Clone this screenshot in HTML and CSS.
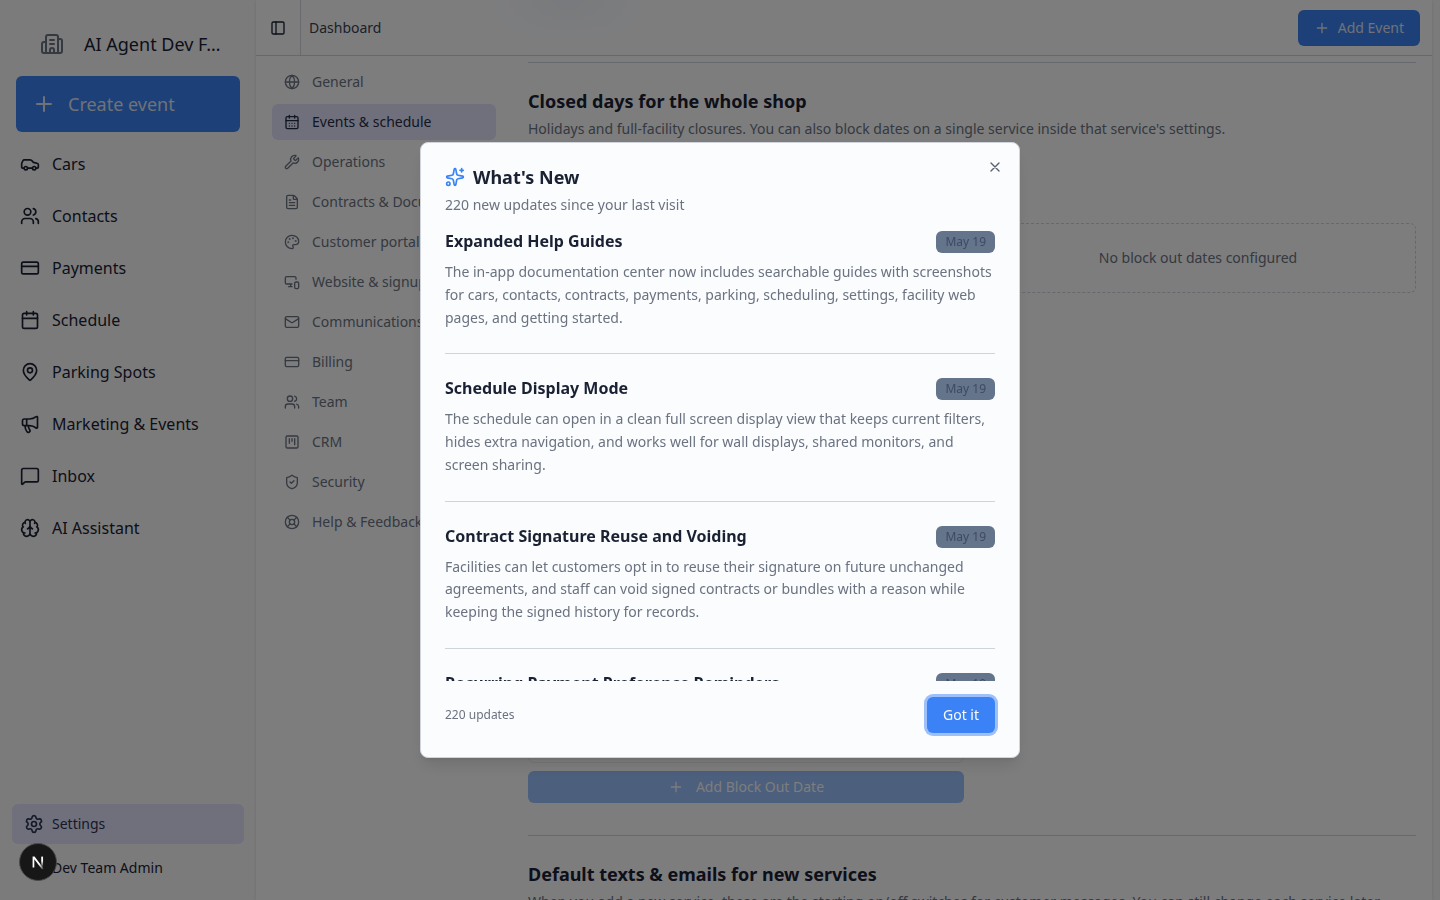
FILE: index.html
```html
<!DOCTYPE html>
<html lang="en">
<head>
<meta charset="utf-8">
<title>Dashboard</title>
<link rel="stylesheet" href="styles.css">
</head>
<body>
<div class="app">
  <aside class="sidebar">
    <div class="workspace">
      <svg class="icon i24 muted" viewBox="0 0 24 24"><path d="M10 12h4M10 8h4M14 21v-3a2 2 0 0 0-4 0v3M6 10H4a2 2 0 0 0-2 2v7a2 2 0 0 0 2 2h16a2 2 0 0 0 2-2V9a2 2 0 0 0-2-2h-2M6 21V5a2 2 0 0 1 2-2h8a2 2 0 0 1 2 2v16"/></svg>
      <span>AI Agent Dev F…</span>
    </div>
    <button class="create"><svg class="icon i24" viewBox="0 0 24 24"><path d="M5 12h14M12 5v14"/></svg><span>Create event</span></button>
    <nav class="nav">
      <a><svg class="icon i20" viewBox="0 0 24 24"><path d="M19 17h2c.6 0 1-.4 1-1v-3c0-.9-.7-1.7-1.5-1.9C18.7 10.6 16 10 16 10s-1.3-1.4-2.2-2.3c-.5-.4-1.1-.7-1.8-.7H5c-.6 0-1.1.4-1.4.9l-1.4 2.9A3.7 3.7 0 0 0 2 12v4c0 .6.4 1 1 1h2M9 17h6"/><circle cx="7" cy="17" r="2"/><circle cx="17" cy="17" r="2"/></svg>Cars</a>
      <a><svg class="icon i20" viewBox="0 0 24 24"><path d="M16 21v-2a4 4 0 0 0-4-4H6a4 4 0 0 0-4 4v2M16 3.128a4 4 0 0 1 0 7.744M22 21v-2a4 4 0 0 0-3-3.87"/><circle cx="9" cy="7" r="4"/></svg>Contacts</a>
      <a><svg class="icon i20" viewBox="0 0 24 24"><rect x="2" y="5" width="20" height="14" rx="2"/><path d="M2 10h20"/></svg>Payments</a>
      <a><svg class="icon i20" viewBox="0 0 24 24"><path d="M8 2v4M16 2v4M3 10h18"/><rect x="3" y="4" width="18" height="18" rx="2"/></svg>Schedule</a>
      <a><svg class="icon i20" viewBox="0 0 24 24"><path d="M20 10c0 4.993-5.539 10.193-7.399 11.799a1 1 0 0 1-1.202 0C9.539 20.193 4 14.993 4 10a8 8 0 0 1 16 0"/><circle cx="12" cy="10" r="3"/></svg>Parking Spots</a>
      <a><svg class="icon i20" viewBox="0 0 24 24"><path d="M11 6a13 13 0 0 0 8.4-2.8A1 1 0 0 1 21 4v12a1 1 0 0 1-1.6.8A13 13 0 0 0 11 14H5a2 2 0 0 1-2-2V8a2 2 0 0 1 2-2zM6 14a12 12 0 0 0 2.4 7.2 2 2 0 0 0 3.2-2.4A8 8 0 0 1 10 14M8 6v8"/></svg>Marketing &amp; Events</a>
      <a><svg class="icon i20" viewBox="0 0 24 24"><path d="M22 17a2 2 0 0 1-2 2H6.828a2 2 0 0 0-1.414.586l-2.202 2.202A.71.71 0 0 1 2 21.286V5a2 2 0 0 1 2-2h16a2 2 0 0 1 2 2z"/></svg>Inbox</a>
      <a><svg class="icon i20" viewBox="0 0 24 24"><path d="M12 18V5M15 13a4.17 4.17 0 0 1-3-4 4.17 4.17 0 0 1-3 4M17.598 6.5A3 3 0 1 0 12 5a3 3 0 1 0-5.598 1.5M17.997 5.125a4 4 0 0 1 2.526 5.77M18 18a4 4 0 0 0 2-7.464M19.967 17.483A4 4 0 1 1 12 18a4 4 0 1 1-7.967-.517M6 18a4 4 0 0 1-2-7.464M6.003 5.125a4 4 0 0 0-2.526 5.77"/></svg>AI Assistant</a>
    </nav>
    <div class="side-foot">
      <a class="settings"><svg class="icon i20" viewBox="0 0 24 24"><path d="M9.671 4.136a2.34 2.34 0 0 1 4.659 0 2.34 2.34 0 0 0 3.319 1.915 2.34 2.34 0 0 1 2.33 4.033 2.34 2.34 0 0 0 0 3.831 2.34 2.34 0 0 1-2.33 4.033 2.34 2.34 0 0 0-3.319 1.915 2.34 2.34 0 0 1-4.659 0 2.34 2.34 0 0 0-3.32-1.915 2.34 2.34 0 0 1-2.33-4.033 2.34 2.34 0 0 0 0-3.831A2.34 2.34 0 0 1 6.35 6.051a2.34 2.34 0 0 0 3.319-1.915"/><circle cx="12" cy="12" r="3"/></svg>Settings</a>
      <a class="account">Dev Team Admin</a>
    </div>
  </aside>

  <main class="main">
    <header class="topbar">
      <div class="toggle"><svg class="icon i16" viewBox="0 0 24 24"><rect x="3" y="3" width="18" height="18" rx="2"/><path d="M9 3v18"/></svg></div>
      <span class="crumb">Dashboard</span>
      <button class="add"><svg class="icon i16" viewBox="0 0 24 24"><path d="M5 12h14M12 5v14"/></svg>Add Event</button>
    </header>
    <div class="body">
      <nav class="subnav">
        <a><svg class="icon i16" viewBox="0 0 24 24"><circle cx="12" cy="12" r="10"/><path d="M12 2a14.5 14.5 0 0 0 0 20 14.5 14.5 0 0 0 0-20M2 12h20"/></svg>General</a>
        <a class="active"><svg class="icon i16" viewBox="0 0 24 24"><path d="M8 2v4M16 2v4M3 10h18M8 14h.01M12 14h.01M16 14h.01M8 18h.01M12 18h.01M16 18h.01"/><rect x="3" y="4" width="18" height="18" rx="2"/></svg>Events &amp; schedule</a>
        <a><svg class="icon i16" viewBox="0 0 24 24"><path d="M14.7 6.3a1 1 0 0 0 0 1.4l1.6 1.6a1 1 0 0 0 1.4 0l3.106-3.105c.32-.322.863-.22.983.218a6 6 0 0 1-8.259 7.057l-7.91 7.91a1 1 0 0 1-2.999-3l7.91-7.91a6 6 0 0 1 7.057-8.259c.438.12.54.662.219.984z"/></svg>Operations</a>
        <a><svg class="icon i16" viewBox="0 0 24 24"><path d="M6 22a2 2 0 0 1-2-2V4a2 2 0 0 1 2-2h8a2.4 2.4 0 0 1 1.704.706l3.588 3.588A2.4 2.4 0 0 1 20 8v12a2 2 0 0 1-2 2zM14 2v5a1 1 0 0 0 1 1h5M10 9H8M16 13H8M16 17H8"/></svg>Contracts &amp; Documents</a>
        <a><svg class="icon i16" viewBox="0 0 24 24"><path d="M12 22a1 1 0 0 1 0-20 10 9 0 0 1 10 9 5 5 0 0 1-5 5h-2.25a1.75 1.75 0 0 0-1.4 2.8l.3.4a1.75 1.75 0 0 1-1.4 2.8z"/><circle cx="13.5" cy="6.5" r=".5"/><circle cx="17.5" cy="10.5" r=".5"/><circle cx="6.5" cy="12.5" r=".5"/><circle cx="8.5" cy="7.5" r=".5"/></svg>Customer portal</a>
        <a><svg class="icon i16" viewBox="0 0 24 24"><path d="M18 8V6a2 2 0 0 0-2-2H4a2 2 0 0 0-2 2v7a2 2 0 0 0 2 2h8M10 19v-3.96 3.15M7 19h5"/><rect x="16" y="12" width="6" height="10" rx="2"/></svg>Website &amp; signup</a>
        <a><svg class="icon i16" viewBox="0 0 24 24"><path d="m22 7-8.991 5.727a2 2 0 0 1-2.009 0L2 7"/><rect x="2" y="4" width="20" height="16" rx="2"/></svg>Communications</a>
        <a><svg class="icon i16" viewBox="0 0 24 24"><rect x="2" y="5" width="20" height="14" rx="2"/><path d="M2 10h20"/></svg>Billing</a>
        <a><svg class="icon i16" viewBox="0 0 24 24"><path d="M16 21v-2a4 4 0 0 0-4-4H6a4 4 0 0 0-4 4v2M16 3.128a4 4 0 0 1 0 7.744M22 21v-2a4 4 0 0 0-3-3.87"/><circle cx="9" cy="7" r="4"/></svg>Team</a>
        <a><svg class="icon i16" viewBox="0 0 24 24"><rect x="3" y="3" width="18" height="18" rx="2"/><path d="M8 7v7M12 7v4M16 7v9"/></svg>CRM</a>
        <a><svg class="icon i16" viewBox="0 0 24 24"><path d="M20 13c0 5-3.5 7.5-7.66 8.95a1 1 0 0 1-.67-.01C7.5 20.5 4 18 4 13V6a1 1 0 0 1 1-1c2 0 4.5-1.2 6.24-2.72a1.17 1.17 0 0 1 1.52 0C14.51 3.81 17 5 19 5a1 1 0 0 1 1 1zM9 12l2 2 4-4"/></svg>Security</a>
        <a><svg class="icon i16" viewBox="0 0 24 24"><circle cx="12" cy="12" r="10"/><path d="m4.93 4.93 4.24 4.24M14.83 9.17l4.24-4.24M14.83 14.83l4.24 4.24M9.17 14.83l-4.24 4.24"/><circle cx="12" cy="12" r="4"/></svg>Help &amp; Feedback</a>
      </nav>
      <div class="content">
        <section class="section">
          <h3>Closed days for the whole shop</h3>
          <p>Holidays and full-facility closures. You can also block dates on a single service inside that service's settings.</p>
          <div class="columns">
            <div class="left">
              <div class="card"></div>
              <button class="block"><svg class="icon i16" viewBox="0 0 24 24"><path d="M5 12h14M12 5v14"/></svg>Add Block Out Date</button>
            </div>
            <div class="empty">No block out dates configured</div>
          </div>
        </section>
        <section class="section">
          <h3>Default texts &amp; emails for new services</h3>
          <p>When you add a new service, these are the starting on/off switches for customer messages. You can still change each service later.</p>
        </section>
      </div>
    </div>
  </main>
</div>

<div class="overlay">
  <div class="dialog">
    <svg class="icon i16 close" viewBox="0 0 24 24"><path d="M18 6 6 18M6 6l12 12"/></svg>
    <div class="head">
      <h2><svg class="icon i20 spark" viewBox="0 0 24 24"><path d="M11.017 2.814a1 1 0 0 1 1.966 0l1.051 5.558a2 2 0 0 0 1.594 1.594l5.558 1.051a1 1 0 0 1 0 1.966l-5.558 1.051a2 2 0 0 0-1.594 1.594l-1.051 5.558a1 1 0 0 1-1.966 0l-1.051-5.558a2 2 0 0 0-1.594-1.594l-5.558-1.051a1 1 0 0 1 0-1.966l5.558-1.051a2 2 0 0 0 1.594-1.594zM20 2v4M22 4h-4"/><circle cx="4" cy="20" r="2"/></svg>What's New</h2>
      <p>220 new updates since your last visit</p>
    </div>
    <div class="updates">
      <article><div class="row"><h4>Expanded Help Guides</h4><span class="badge">May 19</span></div><p>The in-app documentation center now includes searchable guides with screenshots for cars, contacts, contracts, payments, parking, scheduling, settings, facility web pages, and getting started.</p></article>
      <article><div class="row"><h4>Schedule Display Mode</h4><span class="badge">May 19</span></div><p>The schedule can open in a clean full screen display view that keeps current filters, hides extra navigation, and works well for wall displays, shared monitors, and screen sharing.</p></article>
      <article><div class="row"><h4>Contract Signature Reuse and Voiding</h4><span class="badge">May 19</span></div><p>Facilities can let customers opt in to reuse their signature on future unchanged agreements, and staff can void signed contracts or bundles with a reason while keeping the signed history for records.</p></article>
      <article><div class="row"><h4>Recurring Payment Preference Reminders</h4><span class="badge">May 19</span></div></article>
    </div>
    <div class="foot"><span>220 updates</span><button class="ok">Got it</button></div>
  </div>
</div>

<div class="devtool"><svg viewBox="0 0 40 40"><defs><linearGradient id="a" x1="0" y1="0" x2="0" y2="1"><stop offset=".4" stop-color="#fff"/><stop offset="1" stop-color="#fff" stop-opacity="0"/></linearGradient><linearGradient id="b" x1="0" y1="0" x2="1" y2="1"><stop offset=".6" stop-color="#fff"/><stop offset="1" stop-color="#fff" stop-opacity=".1"/></linearGradient></defs><path d="M14 26V14h2.2l10 13.2-1.6 1L15.900 17v9z" fill="url(#b)"/><rect x="23.600" y="14" width="2" height="12" fill="url(#a)"/></svg></div>
</body>
</html>
```
FILE: styles.css
```css
* { box-sizing: border-box; margin: 0; padding: 0; }
html, body { height: 100%; overflow: hidden; }
body { font: 14px/20px "Noto Sans", sans-serif; color: #1a2133; background: #f7f7f7; }
button { font: inherit; border: 0; color: #f8fafc; background: #3b82f6; display: flex; align-items: center; }
h2, h3, h4 { font-weight: 700; }
.icon { fill: none; stroke: currentColor; stroke-width: 2; stroke-linecap: round; stroke-linejoin: round; flex: none; }
.i16 { width: 16px; height: 16px; }
.i20 { width: 20px; height: 20px; }
.i24 { width: 24px; height: 24px; }
.muted { color: #6b7280; }

.app { display: flex; height: 900px; }
.sidebar { width: 256px; flex: none; display: flex; flex-direction: column; background: #f7f7f7; }
.workspace { display: flex; align-items: center; gap: 20px; height: 24px; margin: 32px 16px 20px 40px; font-size: 18px; line-height: 24px; white-space: nowrap; }
.create { height: 56px; margin: 0 16px; padding: 0 16px; gap: 12px; border-radius: 6px; font-size: 18px; }
.create, .add { background: #3a80f2; color: #dfe4ec; }
.nav { display: flex; flex-direction: column; gap: 12px; padding: 12px 12px 0; }
.nav a { display: flex; align-items: center; gap: 12px; height: 40px; padding: 0 8px; font-size: 16px; }
.side-foot { margin-top: auto; padding: 0 12px 12px; }
.side-foot a { display: flex; align-items: center; height: 40px; }
.settings { gap: 8px; padding-left: 12px; border-radius: 6px; background: #e0e1fb; color: #2b3350; margin-bottom: 4px; }
.account { padding-left: 40px; }

.main { width: 1176px; flex: none; display: flex; flex-direction: column; overflow: hidden; background: #fafbfd; box-shadow: 0 1px 3px rgba(0,0,0,.08), 0 0 5px rgba(0,0,0,.05); }
.topbar { display: flex; align-items: center; flex: none; height: 56px; padding-right: 12px; border-bottom: 1px solid #cbd0d8; background: radial-gradient(ellipse 75px 40px at 312px 0, #f2f4fb, transparent); }
.toggle { display: flex; align-items: center; width: 45px; height: 55px; padding-left: 14px; border-right: 1px solid #d1d5db; }
.crumb { flex: 1; padding-left: 8px; color: #3b4150; }
.add { height: 36px; padding: 0 16px; gap: 8px; border-radius: 6px; }
.body { display: flex; gap: 32px; padding: 6px 16px 0; }
.subnav { width: 224px; flex: none; display: flex; flex-direction: column; gap: 4px; padding-top: 2px; }
.subnav a { display: flex; align-items: center; gap: 12px; height: 36px; padding: 0 12px; border-radius: 6px; color: #6b7280; white-space: nowrap; }
.subnav .active { background: #e0e1fb; color: #242c45; }
.content { width: 888px; flex: none; }
.section { border-top: 1px solid #cbd0d8; padding-top: 24px; margin-bottom: 32px; }
h3 { font-size: 18px; line-height: 28px; margin-bottom: 4px; }
.section p { color: #6b7280; white-space: nowrap; }
.columns { display: flex; gap: 16px; align-items: flex-start; margin-top: 84px; }
.left, .empty { width: 436px; }
.card { height: 540px; border: 1px solid #e9ebef; border-radius: 6px; }
.block { width: 100%; height: 32px; margin-top: 8px; justify-content: center; gap: 12px; border-radius: 6px; opacity: .5; }
.empty { display: flex; align-items: center; justify-content: center; height: 70px; border: 1px dashed #cbd0d8; border-radius: 6px; color: #6b7280; }

.overlay { position: fixed; inset: 0; display: flex; align-items: center; justify-content: center; background: rgba(0,0,0,.5); }
.dialog { position: relative; width: 600px; height: 616px; display: flex; flex-direction: column; gap: 16px; padding: 24px; background: #fafcfe; border: 1px solid #d1d5db; border-radius: 8px; box-shadow: 0 10px 15px -3px rgba(0,0,0,.1), 0 4px 6px -4px rgba(0,0,0,.1); }
.close { position: absolute; top: 16px; right: 16px; color: #5b6070; }
.head { display: flex; flex-direction: column; gap: 8px; color: #6b7280; }
h2 { display: flex; align-items: center; gap: 8px; height: 20px; font-size: 18px; line-height: 18px; color: #1a2133; }
.spark { color: #3b82f6; }
.updates { height: 450px; overflow: hidden; }
article { padding-bottom: 24px; border-bottom: 1px solid #cfd3da; margin-bottom: 24px; }
.row { display: flex; justify-content: space-between; align-items: flex-start; height: 22px; margin-bottom: 8px; }
h4 { font-size: 16px; line-height: 20px; }
.badge { height: 22px; padding: 2px 8px; border: 1px solid transparent; border-radius: 6px; background: #64748b; background-clip: border-box; color: #3f4a60; font-size: 12px; line-height: 16px; }
article p { line-height: 22.75px; color: #6b7280; }
.foot { display: flex; align-items: center; justify-content: space-between; font-size: 12px; color: #6b7280; }
.ok { height: 36px; padding: 0 16px; border-radius: 6px; font-size: 14px; box-shadow: 0 0 0 3px #9dc0fa; }
.devtool { position: fixed; left: 19px; top: 843px; width: 38px; height: 38px; border-radius: 50%; background: #171717; border: 1px solid #4a4a4a; }
.devtool svg { display: block; width: 36px; height: 36px; }
```
